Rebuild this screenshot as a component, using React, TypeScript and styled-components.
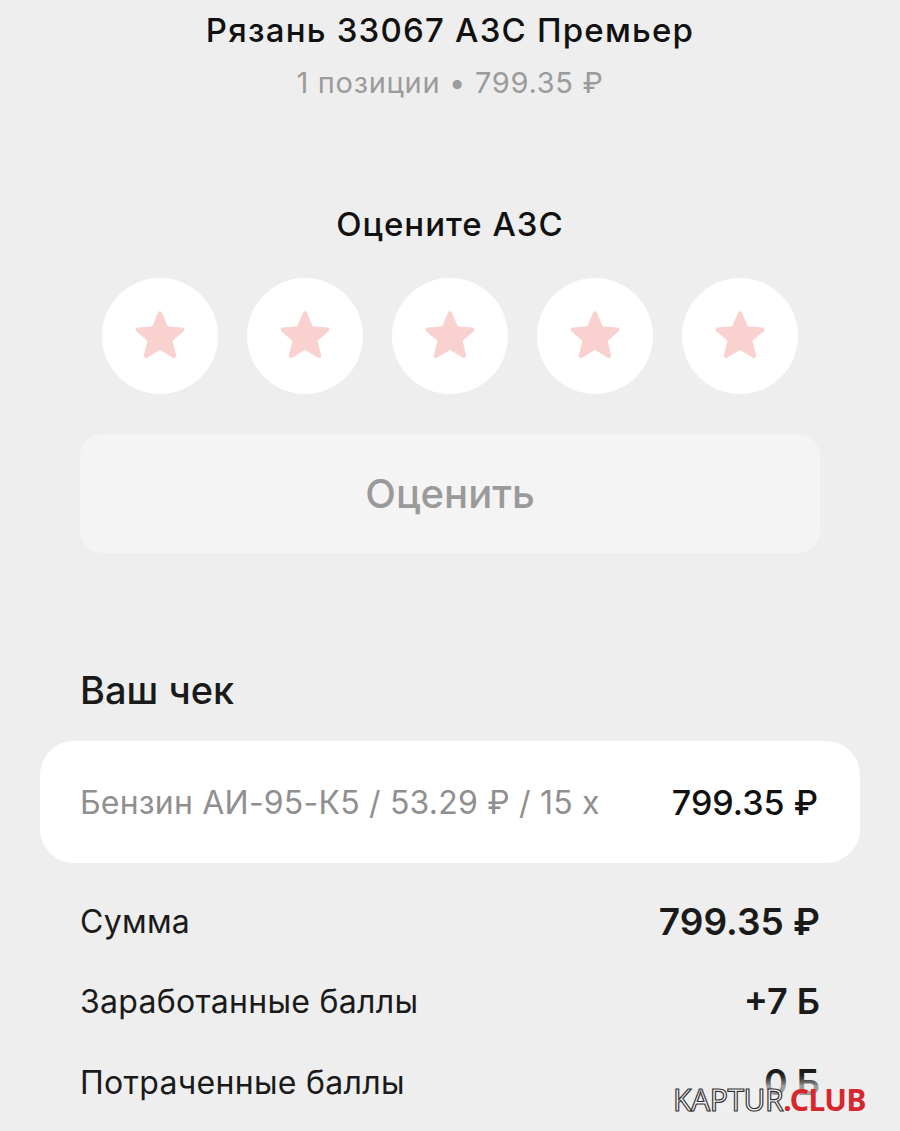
import React from "react";
import styled, { createGlobalStyle } from "styled-components";

const Global = createGlobalStyle`
  html, body { margin: 0; padding: 0; background: #eeeeee; }
  body { font-family: Inter, Roboto, "Liberation Sans", sans-serif; -webkit-font-smoothing: antialiased; }
`;

const Page = styled.div`
  position: relative;
  width: 900px;
  height: 1131px;
  overflow: hidden;
  background: #eeeeee;
  display: flex;
  flex-direction: column;
  align-items: stretch;
  padding-top: 10px;
  box-sizing: border-box;
`;

const Title = styled.div`
  text-align: center;
  font-size: 33px;
  line-height: 40px;
  letter-spacing: 1.2px;
  font-weight: 500;
  color: #111;
`;

const Subtitle = styled.div`
  margin-top: 15px;
  text-align: center;
  font-size: 29px;
  line-height: 36px;
  letter-spacing: 0.7px;
  color: #9b9b9b;
`;

const RateTitle = styled.div`
  margin-top: 103px;
  text-align: center;
  font-size: 33px;
  line-height: 40px;
  letter-spacing: 1px;
  font-weight: 500;
  color: #111;
`;

const Stars = styled.div`
  margin-top: 34px;
  display: flex;
  justify-content: center;
  gap: 29px;
`;

const StarCircle = styled.button`
  width: 116px;
  height: 116px;
  border-radius: 50%;
  border: none;
  padding: 0;
  background: #ffffff;
  display: flex;
  align-items: center;
  justify-content: center;
`;

const RateButton = styled.button`
  margin: 40px 80px 0;
  height: 119px;
  border: none;
  border-radius: 22px;
  background: #f4f4f4;
  font-family: inherit;
  font-size: 40px;
  font-weight: 500;
  color: #9a9a9a;
`;

const SectionTitle = styled.div`
  margin: 115px 80px 0;
  font-size: 38px;
  line-height: 44px;
  font-weight: 500;
  color: #1a1a1a;
`;

const Card = styled.div`
  margin: 29px 40px 0;
  height: 122px;
  border-radius: 34px;
  background: #ffffff;
  display: flex;
  align-items: center;
  justify-content: space-between;
  padding: 0 42px 0 40px;
  box-sizing: border-box;
`;

const ItemName = styled.span`
  font-size: 32px;
  letter-spacing: 0.2px;
  color: #8f8f8f;
`;

const ItemPrice = styled.span`
  font-size: 34px;
  font-weight: 500;
  color: #111;
`;

const Summary = styled.div`
  margin: 18px 80px 0 80px;
  display: flex;
  flex-direction: column;
`;

const Row = styled.div`
  height: 80px;
  display: flex;
  align-items: center;
  justify-content: space-between;
  &:nth-child(3) { height: 82px; }
`;

const Label = styled.span`
  font-size: 32px;
  letter-spacing: 0.3px;
  color: #1a1a1a;
`;

const Value = styled.span<{ $big?: boolean }>`
  font-size: ${(p) => (p.$big ? 37 : 36)}px;
  font-weight: 600;
  color: #1a1a1a;
`;

const Watermark = styled.div`
  position: absolute;
  right: 30px;
  bottom: 16px;
  padding: 0 4px;
  font-family: "Noto Sans", "DejaVu Sans", sans-serif;
  font-size: 30px;
  line-height: 30px;
  letter-spacing: -0.5px;
  background: rgba(240, 240, 240, 0.6);
  box-shadow: 0 0 8px 4px rgba(240, 240, 240, 0.6);
`;

const Outline = styled.span`
  color: #ffffff;
  -webkit-text-stroke: 1.2px #333;
  font-weight: 400;
`;

const Red = styled.span`
  color: #d8262d;
  font-weight: 700;
`;

const Star = () => (
  <svg width="58" height="56" viewBox="0 0 24 23">
    <path
      d="M12 2.2 L14.6 8.4 L21.2 8.9 L16.2 13.2 L17.8 19.7 L12 16.2 L6.2 19.7 L7.8 13.2 L2.8 8.9 L9.4 8.4 Z"
      fill="#f9d2d0"
      stroke="#f9d2d0"
      strokeWidth="1.8"
      strokeLinejoin="round"
    />
  </svg>
);

export default function App() {
  return (
    <Page>
      <Global />
      <Title>Рязань 33067 АЗС Премьер</Title>
      <Subtitle>1 позиции • 799.35 ₽</Subtitle>
      <RateTitle>Оцените АЗС</RateTitle>
      <Stars>
        {[0, 1, 2, 3, 4].map((i) => (
          <StarCircle key={i}>
            <Star />
          </StarCircle>
        ))}
      </Stars>
      <RateButton>Оценить</RateButton>
      <SectionTitle>Ваш чек</SectionTitle>
      <Card>
        <ItemName>Бензин АИ-95-К5 / 53.29 ₽ / 15 x</ItemName>
        <ItemPrice>799.35 ₽</ItemPrice>
      </Card>
      <Summary>
        <Row>
          <Label>Сумма</Label>
          <Value $big>799.35 ₽</Value>
        </Row>
        <Row>
          <Label>Заработанные баллы</Label>
          <Value>+7 Б</Value>
        </Row>
        <Row>
          <Label>Потраченные баллы</Label>
          <Value>0 Б</Value>
        </Row>
      </Summary>
      <Watermark>
        <Outline>KAPTUR</Outline>
        <Red>.CLUB</Red>
      </Watermark>
    </Page>
  );
}
